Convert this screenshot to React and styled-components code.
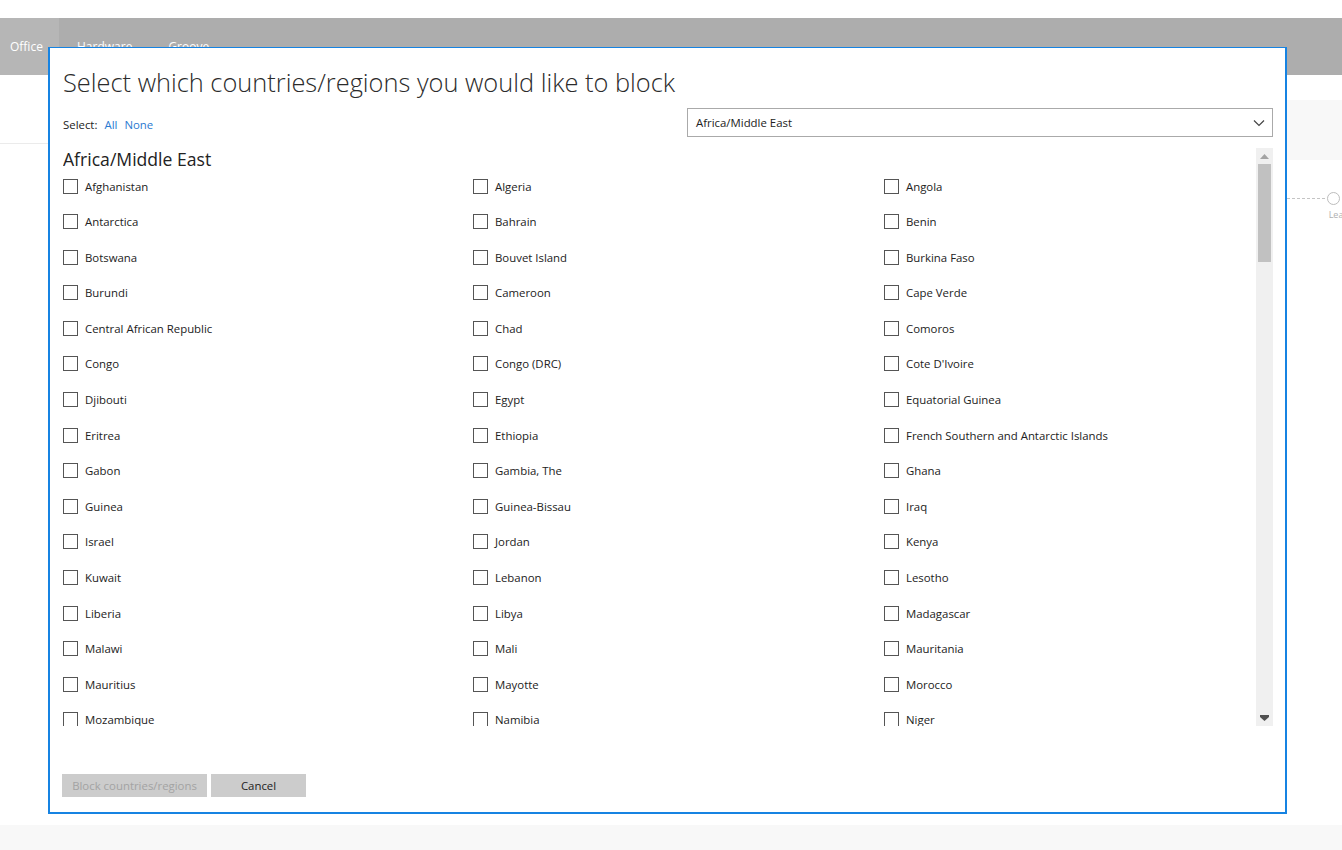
import React from 'react';
import styled, { createGlobalStyle } from 'styled-components';

const GlobalStyle = createGlobalStyle`
  html, body {
    margin: 0;
    padding: 0;
    background: #fff;
    font-family: "Segoe UI", "Open Sans", "Noto Sans", sans-serif;
  }
`;

const countries = [
  'Afghanistan', 'Algeria', 'Angola',
  'Antarctica', 'Bahrain', 'Benin',
  'Botswana', 'Bouvet Island', 'Burkina Faso',
  'Burundi', 'Cameroon', 'Cape Verde',
  'Central African Republic', 'Chad', 'Comoros',
  'Congo', 'Congo (DRC)', "Cote D'Ivoire",
  'Djibouti', 'Egypt', 'Equatorial Guinea',
  'Eritrea', 'Ethiopia', 'French Southern and Antarctic Islands',
  'Gabon', 'Gambia, The', 'Ghana',
  'Guinea', 'Guinea-Bissau', 'Iraq',
  'Israel', 'Jordan', 'Kenya',
  'Kuwait', 'Lebanon', 'Lesotho',
  'Liberia', 'Libya', 'Madagascar',
  'Malawi', 'Mali', 'Mauritania',
  'Mauritius', 'Mayotte', 'Morocco',
  'Mozambique', 'Namibia', 'Niger',
];

const App = () => {
  return (
    <>
      <GlobalStyle />
      <Page>
        <Nav>
          <Tab active>Office</Tab>
          <Tab>Hardware</Tab>
          <Tab>Groove</Tab>
        </Nav>
        <Body>
          <Header>
            <HeaderLine />
            <Panel />
          </Header>
          <Timeline>
            <Dashes />
            <StepWrap>
              <Circle />
              <StepLabel>Lea</StepLabel>
            </StepWrap>
          </Timeline>
        </Body>
        <FooterBand />
      </Page>

      <Dialog>
        <Title>Select which countries/regions you would like to block</Title>
        <SelectRow>
          <SelectLinks>
            <span>Select:</span>
            <LinkText>All</LinkText>
            <LinkText>None</LinkText>
          </SelectLinks>
          <Dropdown>
            <span>Africa/Middle East</span>
            <svg width="12" height="8" viewBox="0 0 12 8">
              <path d="M1 1.5 L6 6.5 L11 1.5" fill="none" stroke="#444" strokeWidth="1.2" />
            </svg>
          </Dropdown>
        </SelectRow>

        <ListBox>
          <ListInner>
            <RegionTitle>Africa/Middle East</RegionTitle>
            <Grid>
              {countries.map(c => (
                <Item key={c}>
                  <Box />
                  <Label>{c}</Label>
                </Item>
              ))}
            </Grid>
          </ListInner>
          <Scrollbar>
            <Arrow>
              <svg width="9" height="5" viewBox="0 0 9 5"><path d="M0 5 L4.5 0 L9 5 Z" fill="#a3a3a3" /></svg>
            </Arrow>
            <Thumb />
            <Track />
            <Arrow>
              <svg width="9" height="6" viewBox="0 0 9 6"><path d="M0 0 H9 V2 L4.5 6 L0 2 Z" fill="#505050" /></svg>
            </Arrow>
          </Scrollbar>
        </ListBox>

        <Buttons>
          <Button disabled width={145}>Block countries/regions</Button>
          <Button width={95}>Cancel</Button>
        </Buttons>
      </Dialog>
    </>
  );
};

export default App;

const Page = styled.div`
  height: 850px;
  display: flex;
  flex-direction: column;
  padding-top: 18px;
  box-sizing: border-box;
  overflow: hidden;
`;

const Nav = styled.div`
  height: 57px;
  background: #adadad;
  display: flex;
  align-items: stretch;
  flex-shrink: 0;
`;

const Tab = styled.div`
  display: flex;
  align-items: center;
  padding: 0 18px 0 ${p => (p.active ? '10px' : '18px')};
  background: ${p => (p.active ? '#b6b6b6' : 'transparent')};
  color: #fff;
  font-size: 12px;
  width: ${p => (p.active ? '31px' : 'auto')};
`;

const Body = styled.div`
  flex: 1;
  display: flex;
  flex-direction: column;
`;

const Header = styled.div`
  display: flex;
  align-items: flex-start;
  height: 85px;
`;

const HeaderLine = styled.div`
  flex: 1;
  height: 68px;
  border-bottom: 1px solid #ebebeb;
`;

const Panel = styled.div`
  width: 420px;
  height: 60px;
  margin-top: 25px;
  background: #f8f8f8;
`;

const Timeline = styled.div`
  display: flex;
  justify-content: flex-end;
  align-items: flex-start;
  margin-top: 32px;
`;

const Dashes = styled.div`
  width: 38px;
  margin-top: 6px;
  border-top: 1px dashed #c4c4c4;
`;

const StepWrap = styled.div`
  display: flex;
  flex-direction: column;
  align-items: center;
  width: 16px;
  margin-right: 1px;
`;

const Circle = styled.div`
  width: 11px;
  height: 11px;
  border: 1px solid #bdbdbd;
  border-radius: 50%;
`;

const StepLabel = styled.div`
  font-size: 9px;
  color: #b0b0b0;
  margin-top: 3px;
  margin-left: 6px;
`;

const FooterBand = styled.div`
  height: 25px;
  background: #f8f8f8;
  flex-shrink: 0;
`;

const Dialog = styled.div`
  position: fixed;
  left: 48px;
  top: 47px;
  width: 1239px;
  height: 767px;
  box-sizing: border-box;
  border: 2px solid #1683e2;
  border-top-width: 1px;
  background: #fff;
  padding: 16px 12px 15px 13px;
  display: flex;
  flex-direction: column;
`;

const Title = styled.h1`
  margin: 0;
  font-size: 25.4px;
  font-weight: 300;
  line-height: 36px;
  color: #2b2b2b;
`;

const SelectRow = styled.div`
  display: flex;
  justify-content: space-between;
  align-items: center;
  margin-top: 8px;
  font-size: 11.4px;
  color: #222;
`;

const SelectLinks = styled.div`
  display: flex;
  gap: 7px;
  margin-top: 3px;
`;

const LinkText = styled.span`
  color: #2a7ad1;
`;

const Dropdown = styled.div`
  width: 586px;
  height: 29px;
  box-sizing: border-box;
  border: 1px solid #aaa;
  display: flex;
  align-items: center;
  justify-content: space-between;
  padding: 0 7px 0 8px;
  font-size: 11.4px;
  color: #222;
`;

const ListBox = styled.div`
  margin-top: 11px;
  height: 578px;
  display: flex;
  overflow: hidden;
`;

const ListInner = styled.div`
  flex: 1;
  overflow: hidden;
`;

const RegionTitle = styled.div`
  font-size: 17.6px;
  line-height: 22px;
  color: #222;
`;

const Grid = styled.div`
  display: grid;
  grid-template-columns: 410px 411px 1fr;
  grid-auto-rows: 35.6px;
  margin-top: 6px;
`;

const Item = styled.label`
  display: flex;
  align-items: center;
  height: 20px;
  gap: 7px;
`;

const Box = styled.span`
  width: 13px;
  height: 13px;
  border: 1px solid #555;
  flex-shrink: 0;
`;

const Label = styled.span`
  font-size: 11.4px;
  color: #222;
  white-space: nowrap;
`;

const Scrollbar = styled.div`
  width: 17px;
  background: #f0f0f0;
  display: flex;
  flex-direction: column;
  align-items: center;
`;

const Arrow = styled.div`
  height: 16px;
  display: flex;
  align-items: center;
  justify-content: center;
`;

const Thumb = styled.div`
  width: 13px;
  height: 98px;
  background: #c1c1c1;
`;

const Track = styled.div`
  flex: 1;
`;

const Buttons = styled.div`
  margin-top: auto;
  display: flex;
  gap: 4px;
  margin-left: -1px;
`;

const Button = styled.button`
  width: ${p => p.width}px;
  height: 23px;
  border: none;
  background: #cccccc;
  font-family: inherit;
  font-size: 11.4px;
  color: ${p => (p.disabled ? '#a3a3a3' : '#222')};
  padding: 0;
`;
